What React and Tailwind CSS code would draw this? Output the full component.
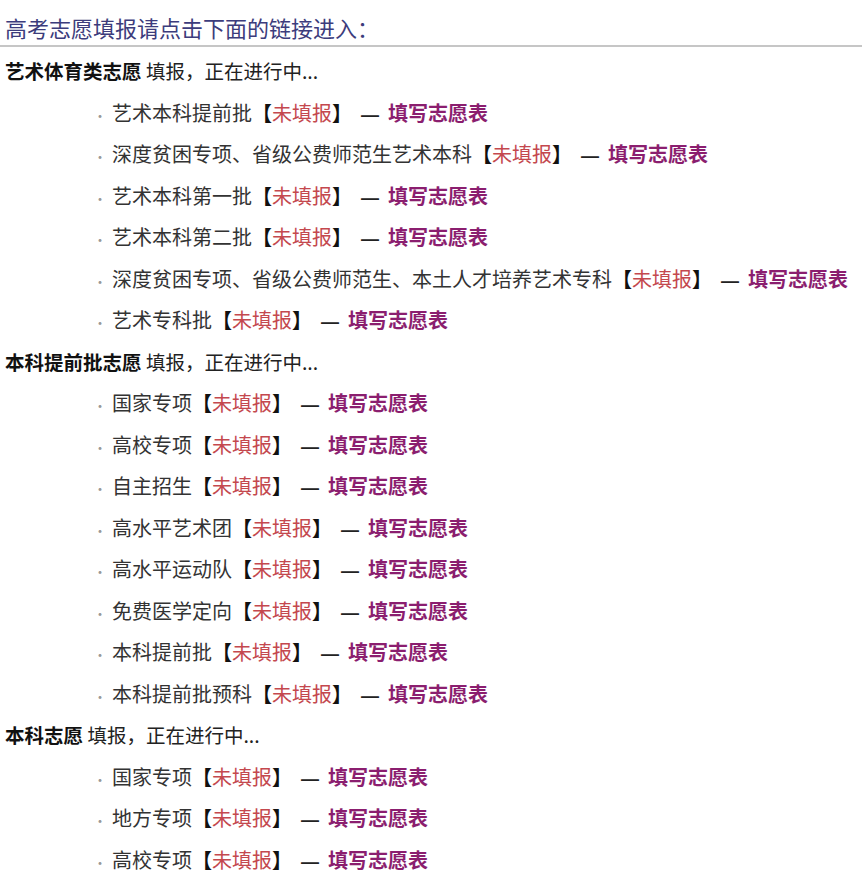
import React from 'react';

const sections = [
    {
        title: '艺术体育类志愿',
        items: [
            '艺术本科提前批',
            '深度贫困专项、省级公费师范生艺术本科',
            '艺术本科第一批',
            '艺术本科第二批',
            '深度贫困专项、省级公费师范生、本土人才培养艺术专科',
            '艺术专科批',
        ],
    },
    {
        title: '本科提前批志愿',
        items: [
            '国家专项',
            '高校专项',
            '自主招生',
            '高水平艺术团',
            '高水平运动队',
            '免费医学定向',
            '本科提前批',
            '本科提前批预科',
        ],
    },
    {
        title: '本科志愿',
        items: ['国家专项', '地方专项', '高校专项'],
    },
];

function Item({ name }) {
    return (
        <div className="pl-[93px] h-[41.5px] leading-[41.5px] text-[20px] text-[#333] whitespace-nowrap">
            <span className="text-[#999] text-[14px] mr-[5px]">·</span>
            {name}
            <span className="font-bold text-[#111]">【</span>
            <span className="text-[#c4484e]">未填报</span>
            <span className="font-bold text-[#111]">】</span>
            <span className="inline-block mx-[9px] text-[18px] font-bold text-[#222]" style={{ fontFamily: '"Liberation Sans", sans-serif' }}>—</span>
            <a href="#" className="font-bold text-[#8b1e6f]">填写志愿表</a>
        </div>
    );
}

export default function App() {
    return (
        <div className="w-[862px] h-[892px] overflow-hidden bg-white" style={{ fontFamily: '"Noto Sans CJK SC", "Noto Sans", sans-serif' }}>
            <div className="h-[47px] pt-[12px] pl-[5px] leading-[30px] text-[22px] text-[#3c3c7c] border-b-2 border-[#c6c6c6] whitespace-nowrap">
                高考志愿填报请点击下面的链接进入：
            </div>
            <div className="mt-[3px]">
                {sections.map(sec => (
                    <div key={sec.title}>
                        <div className="pl-[5px] h-[41.5px] leading-[41.5px] text-[19.5px] text-[#222] whitespace-nowrap">
                            <span className="font-bold text-[#111]">{sec.title}</span> 填报，正在进行中...
                        </div>
                        {sec.items.map((name, i) => (
                            <Item key={i} name={name} />
                        ))}
                    </div>
                ))}
            </div>
        </div>
    );
}
